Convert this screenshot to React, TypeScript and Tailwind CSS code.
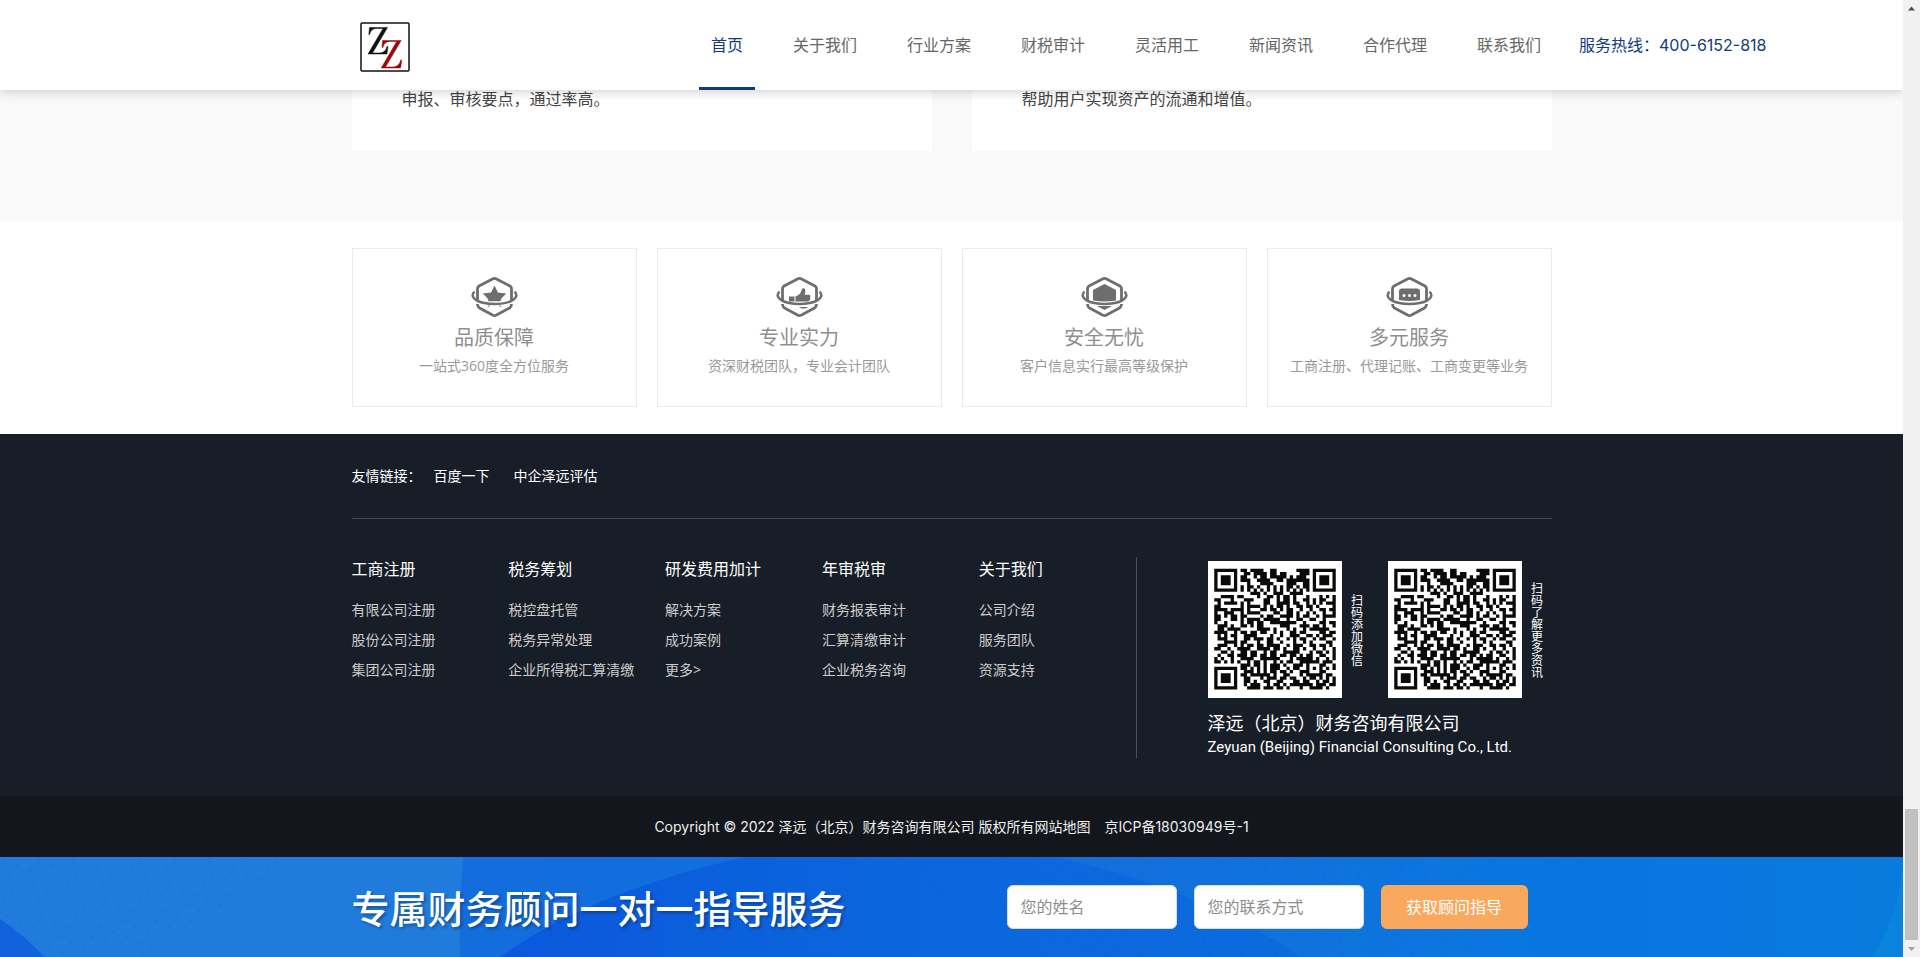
import type { ReactNode } from "react";

const menu = ["首页", "关于我们", "行业方案", "财税审计", "灵活用工", "新闻资讯", "合作代理", "联系我们"];

const introCards = [
    { id: 1, text: "申报、审核要点，通过率高。" },
    { id: 2, text: "帮助用户实现资产的流通和增值。" },
];

const advantages = [
    {
        title: "品质保障",
        desc: "一站式360度全方位服务",
        icon: (
            <>
                <path d="M23.5 8.5l3.4 6.9 8.3 1.2-4.8 5-.9 2.6h-12l-.9-2.6-4.8-5 8.3-1.2z" />
                <path d="M16.5 30.5l1-2h2zM30.5 30.5l-1-2h-2z" />
            </>
        ),
    },
    {
        title: "专业实力",
        desc: "资深财税团队，专业会计团队",
        icon: (
            <>
                <path d="M13 19.5h5.5v5H13z" />
                <path d="M19.5 19.3c3-.8 5.5-2.8 6-6 .2-2.4 3-3 3.7-.6.5 2-.2 3.7-.7 5.1h4.2c2 0 2.3 1.9 1.2 2.7.7.9.5 2.3-.4 2.8-.5 1-1.2 1.2-2.5 1.2H19.5z" />
                <path d="M23 30h9l-2.500 1.600h-4z" />
            </>
        ),
    },
    {
        title: "安全无忧",
        desc: "客户信息实行最高等级保护",
        icon: (
            <>
                <path d="M23.5 7L35 13v10.500q-11.500 2-23 0V13z" />
                <path d="M16 29h15l-7.500 4z" />
            </>
        ),
    },
    {
        title: "多元服务",
        desc: "工商注册、代理记账、工商变更等业务",
        icon: (
            <>
                <path d="M16 11.500h15a3 3 0 0 1 3 3V23q-10.500 2-21 0v-8.500a3 3 0 0 1 3-3z" />
                <g fill="#fff">
                    <circle cx="18" cy="18.5" r="1.5" />
                    <circle cx="23.5" cy="18.5" r="1.5" />
                    <circle cx="29" cy="18.5" r="1.5" />
                </g>
            </>
        ),
    },
];

const footerColumns = [
    { title: "工商注册", links: ["有限公司注册", "股份公司注册", "集团公司注册"] },
    { title: "税务筹划", links: ["税控盘托管", "税务异常处理", "企业所得税汇算清缴"] },
    { title: "研发费用加计", links: ["解决方案", "成功案例", "更多>"] },
    { title: "年审税审", links: ["财务报表审计", "汇算清缴审计", "企业税务咨询"] },
    { title: "关于我们", links: ["公司介绍", "服务团队", "资源支持"] },
];

const qrRows = [
    "#######.##.####..##......####.#######",
    "#.....#..##.####.##.##....###.#.....#",
    "#.###.#.##..#.##.#####.#.###..#.###.#",
    "#.###.#.###..####..##.#######.#.###.#",
    "#.###.#...#...####....###..##.#.###.#",
    "#.....#.#.##.#..#.#.#.##.#.##.#.....#",
    "#######.#.#.#.#.#.#.#.#.#.#.#.#######",
    "...........###.#..###..####..........",
    "..####.##....#..##.#.##.#...#...#.#.#",
    "##...#...###...##..#.##.#..##.#.##..#",
    ".#.####.#.#....##..####.##..#.#.#.###",
    "##......#.####.#.#.##.#..##.##.#....#",
    "####.####.#...##.##.#.##..#..#..##.##",
    "#..###..#.####....##..##.#..#.#..#..#",
    "##.#.##.##....#.##..####.#.##..#.####",
    "##...##.#.####.#####..#..##..##..#...",
    "#..#....#.##.##..########..#....##.##",
    ".###.#..##.#.##.....###...###.##.#..#",
    ".##.####.....####.#...#.#..#.######..",
    "####..#.##.##.##..#.#..##.##....##.##",
    ".#.#.##..####....#..#..###..##.#.###.",
    ".###..#..##.###.##.#..#.#.##..#.##..#",
    "...####.##...#..##..#...#..#.#....##.",
    ".###..#.#.##.##.####..#.###..##.##.#.",
    "##..#..####..####.##.#..##.#..#..#..#",
    "..##.#..##.##..#.##..#####...#.##.#.#",
    ".#..##.###.##.##.##.##.##.#.##..##..#",
    "#.#..#..####..######...#.#####.#..#.#",
    "##.#.#.#..#.##.#..#.#.##..######.###.",
    "........###.##.#.###.#..###.#...##..#",
    "#######.##.#.#.#.###..#.##..#.#.#.#.#",
    "#.....#..###.#.#.##.##.#..###...##...",
    "#.###.#.##.######.#..##...#.#####.##.",
    "#.###.#..##...#.###.##.##..#.##.#.#.#",
    "#.###.#..##.#..##..##...##.##..#.##.#",
    "#.....#..#.###..#.##.#.#######.###.##",
    "#######...####.###.##.#...#..####.#..",
];

const qrPath = qrRows
    .map((row, y) => row.split("").map((cell, x) => (cell === "#" ? `M${x} ${y}h1v1h-1z` : "")).join(""))
    .join("");

function Logo() {
    return (
        <svg viewBox="0 0 50 50" className="h-[50px] w-[50px]" aria-label="泽远">
            <rect x="1" y="1" width="48" height="48" rx="1" fill="#fff" stroke="#111" strokeWidth="1.5" />
            <path d="M9.5 5.5H27.500L12.500 31h7q6 0 7.500-6.500h1l-1 7.500H8l15-25.500h-7q-5 0-6.500 6H8.800z" fill="#111" stroke="#111" strokeWidth="0.5" />
            <path d="M22.500 18.500H41.200L25.500 45h7.500q6 0 7.800-7h1l-1.200 8H21.200l15.500-26.500h-7q-5.500 0-6.800 6H22z" fill="#9b0808" stroke="#9b0808" strokeWidth="0.5" />
        </svg>
    );
}

function AdvantageIcon({ children }: { children: ReactNode }) {
    return (
        <svg viewBox="0 0 47 40" className="h-10 w-[47px] text-[#6e6e6e]" fill="currentColor" aria-hidden="true">
            {children}
            <g fill="none" stroke="currentColor" strokeWidth="2.8" strokeLinejoin="round">
                <path d="M6.500 23V11.500Q6.500 10 8 9L22 1.800q1.500-.8 3 0L39 9q1.500 1 1.500 2.500V23" />
                <path d="M6.500 27q0 2.800 2 4L22 38.200q1.500.7 3 0L38.500 31q2-1.200 2-4" />
                <path d="M3.500 14.500C-3 21.500 9 27 23.500 27S50 21.500 43.500 14.500" strokeWidth="2.5" />
            </g>
        </svg>
    );
}

function QrCode({ label }: { label: string }) {
    return (
        <div className="flex items-center gap-[6px]">
            <svg viewBox="-1.9 -2.4 40.8 42" preserveAspectRatio="none" className="h-[137px] w-[134px] bg-white" role="img" aria-label={label}>
                <path d={qrPath} fill="#0a0a0a" />
            </svg>
            <span className="text-xs leading-4 [writing-mode:vertical-rl]">{label}</span>
        </div>
    );
}

function BannerBackground() {
    return (
        <svg viewBox="0 0 1903 100" preserveAspectRatio="none" className="absolute inset-0 h-full w-full" aria-hidden="true">
            <defs>
                <linearGradient id="sea" x1="0" x2="1" y1="0" y2="0">
                    <stop offset="0" stopColor="#1b78dc" />
                    <stop offset="0.24" stopColor="#136ddd" />
                    <stop offset="0.6" stopColor="#1270dc" />
                    <stop offset="0.85" stopColor="#0878e0" />
                    <stop offset="1" stopColor="#0a84dc" />
                </linearGradient>
                <linearGradient id="deep" x1="0" x2="1" y1="0" y2="0">
                    <stop offset="0" stopColor="#0b58dc" />
                    <stop offset="0.5" stopColor="#0b66dd" />
                    <stop offset="1" stopColor="#0b6bdd" />
                </linearGradient>
                <pattern id="dots" width="22" height="16" patternUnits="userSpaceOnUse" patternTransform="rotate(-14)">
                    <circle cx="4" cy="4" r="1.6" fill="#0648b8" />
                    <circle cx="15" cy="12" r="1.6" fill="#0648b8" />
                </pattern>
            </defs>
            <rect width="1903" height="100" fill="url(#sea)" />
            <path d="M0 0H463Q459 50 460 100H0z" fill="#207bdc" />
            <path d="M0 62Q24 78 44 100H0z" fill="#1162dc" />
            <path d="M500 100Q590 35 745 0H1055Q1210 35 1300 100z" fill="url(#deep)" />
            <path d="M1460 0H1903V6Q1898 60 1872 100H1535Q1500 35 1460 0z" fill="#0874df" opacity="0.6" />
            <path d="M0 0H300L150 100H0zM850 0H1500V100H1100z" fill="url(#dots)" opacity="0.12" />
        </svg>
    );
}

/* classic 17px scroll track on the right edge of the window */
function ScrollTrack() {
    return (
        <div className="relative z-20 flex w-[17px] shrink-0 flex-col items-center bg-[#f1f1f1]" aria-hidden="true">
            <svg viewBox="0 0 17 17" className="h-[17px] w-[17px]" fill="#505050"><path d="M8.500 6.500l3.500 4H5z" /></svg>
            <div className="grow" />
            <div className="h-[131px] w-[13px] bg-[#c1c1c1]" />
            <svg viewBox="0 0 17 17" className="h-[17px] w-[17px]" fill="#a3a3a3"><path d="M8.500 11l3.500-4H5z" /></svg>
        </div>
    );
}

export default function App() {
    return (
        <div className="flex min-h-screen bg-white font-['Open_Sans','Noto_Sans_CJK_SC',sans-serif] text-base text-[#444]">
            <div className="min-w-0 grow">
                <header className="relative z-10 flex h-[90px] items-center justify-between bg-white pr-[136px] pl-[360px] whitespace-nowrap shadow-[0_2px_10px_rgba(0,0,0,0.18)]">
                    <div className="pt-1"><Logo /></div>
                    <div className="flex items-center">
                        <nav className="flex gap-[26px]">
                            {menu.map((item, i) => (
                                <a
                                    key={item}
                                    href="#"
                                    className={
                                        i === 0
                                            ? "h-[90px] border-b-3 border-[#133a7c] px-3 leading-[90px] text-[#133a7c]"
                                            : "h-[90px] px-3 leading-[90px] text-[#666]"
                                    }
                                >
                                    {item}
                                </a>
                            ))}
                        </nav>
                        <a href="tel:400-6152-818" className="ml-[26px] w-[188px] font-['Inter','Noto_Sans_CJK_SC',sans-serif] text-[#133a7c]">服务热线：400-6152-818</a>
                    </div>
                </header>

                <section className="bg-[#f9f9f9] pb-[70px]">
                    <div className="mx-auto grid max-w-[1200px] grid-cols-2 gap-10">
                        {introCards.map((card) => (
                            <p key={card.id} className="bg-white px-[50px] pb-[42px] leading-[19px]">{card.text}</p>
                        ))}
                    </div>
                </section>

                <section className="py-[27px]">
                    <div className="mx-auto grid max-w-[1200px] grid-cols-4 gap-5">
                        {advantages.map((item) => (
                            <div key={item.title} className="flex h-[159px] flex-col items-center border border-[#ebebeb] pt-7">
                                <AdvantageIcon>{item.icon}</AdvantageIcon>
                                <h3 className="mt-[5px] text-xl leading-8 text-[#8f8f8f]">{item.title}</h3>
                                <p className="text-sm leading-6 text-[#999]">{item.desc}</p>
                            </div>
                        ))}
                    </div>
                </section>

                <footer className="bg-[#181e27] text-white">
                    <div className="mx-auto h-[362px] max-w-[1200px]">
                        <div className="flex h-[85px] items-center border-b border-[#434851] text-sm">
                            <span className="w-[82px]">友情链接：</span>
                            <a href="#" className="mr-6">百度一下</a>
                            <a href="#">中企泽远评估</a>
                        </div>
                        <div className="flex pt-[38px]">
                            <div className="grid h-[201px] w-[785px] shrink-0 grid-cols-5 border-r border-[#4a4f57] whitespace-nowrap">
                                {footerColumns.map((col) => (
                                    <div key={col.title}>
                                        <h4 className="mb-[14px] leading-6">{col.title}</h4>
                                        <ul className="text-sm leading-[30px] text-[#ccc]">
                                            {col.links.map((link) => (
                                                <li key={link}><a href="#">{link}</a></li>
                                            ))}
                                        </ul>
                                    </div>
                                ))}
                            </div>
                            <div className="pt-1 pl-[71px] whitespace-nowrap">
                                <div className="flex gap-6">
                                    <QrCode label="扫码添加微信" />
                                    <QrCode label="扫码了解更多资讯" />
                                </div>
                                <p className="mt-[11px] text-lg leading-7">泽远（北京）财务咨询有限公司</p>
                                <p className="font-['Roboto',sans-serif] text-[15px] leading-5">Zeyuan (Beijing) Financial Consulting Co., Ltd.</p>
                            </div>
                        </div>
                    </div>
                    <div className="flex h-[61px] items-center justify-center bg-[#13161d] font-['Inter','Noto_Sans_CJK_SC',sans-serif] text-sm text-[#eee]">
                        <span>Copyright © 2022 泽远（北京）财务咨询有限公司 版权所有</span>
                        <a href="#">网站地图</a>
                        <a href="#" className="ml-[14px]">京ICP备18030949号-1</a>
                    </div>
                </footer>

                <section className="relative h-[100px] overflow-hidden">
                    <BannerBackground />
                    <form className="relative mx-auto flex h-full max-w-[1200px] items-center" onSubmit={(e) => e.preventDefault()}>
                        <h2 className="w-[655px] pt-[2px] text-[38px] leading-[50px] font-medium whitespace-nowrap text-white [text-shadow:2px_2px_3px_rgba(0,0,0,0.3)]">专属财务顾问一对一指导服务</h2>
                        <div className="flex gap-[17px]">
                            <input aria-label="您的姓名" placeholder="您的姓名" className="h-11 w-[170px] rounded-md border border-[#ddd] bg-white px-[13px] placeholder:text-[#8c8c8c]" />
                            <input aria-label="您的联系方式" placeholder="您的联系方式" className="h-11 w-[170px] rounded-md border border-[#ddd] bg-white px-[13px] placeholder:text-[#8c8c8c]" />
                            <button type="submit" className="h-11 w-[147px] rounded-md bg-[#f8a95d] text-white">获取顾问指导</button>
                        </div>
                    </form>
                </section>
            </div>
            <ScrollTrack />
        </div>
    );
}
